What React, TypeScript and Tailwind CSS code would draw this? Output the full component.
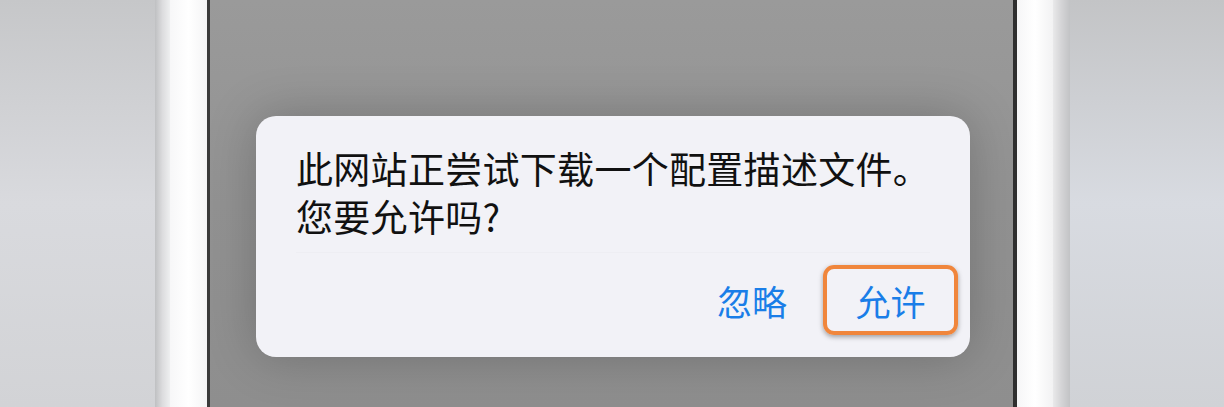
export default function App() {
  return (
    <div
      className="flex h-[407px] w-[1224px] overflow-hidden"
      style={{ fontFamily: '"Noto Sans CJK SC", "Noto Sans", sans-serif' }}
    >
      {/* backdrop left */}
      <div className="w-[155px] shrink-0 bg-linear-to-b from-[#c6c7c9] via-[#d9dade] to-[#d2d3d6]" />
      {/* phone frame left */}
      <div className="w-[15px] shrink-0 bg-linear-to-r from-[#bfc0c2] via-[#dcdcde] to-[#eeeff0]" />
      <div className="w-[37px] shrink-0 bg-linear-to-r from-[#f7f7f8] via-white to-[#f4f4f5]" />
      <div className="w-[3px] shrink-0 bg-[#3a3a3a]" />

      {/* screen */}
      <div className="flex w-[803px] shrink-0 items-start bg-linear-to-b from-[#9a9a9a] via-[#929292] to-[#8e8e8e]">
        <div className="ml-[46px] mt-[116px] flex h-[241px] w-[714px] flex-col rounded-[20px] bg-[#f2f2f7] shadow-[0_0_50px_rgba(0,0,0,0.22)]">
          <div className="whitespace-nowrap pl-[40px] pr-[20px] pt-[28px] text-[37px] leading-[48px] tracking-[0.3px] text-[#111]">
            <p>此网站正尝试下载一个配置描述文件。</p>
            <p>您要允许吗?</p>
          </div>
          <div className="mx-[40px] mt-[12px] h-px bg-[#eeeef3]" />
          <div className="mt-auto flex items-center justify-end gap-[36px] pb-[22px] pr-[12px]">
            <span className="text-[35px] leading-none text-[#1a7ee8]">忽略</span>
            <div className="flex h-[70px] w-[135px] items-center justify-center rounded-[11px] border-[4px] border-[#f0863c] shadow-[0_2px_5px_rgba(0,0,0,0.35)]">
              <span className="text-[35px] leading-none text-[#1a7ee8]">允许</span>
            </div>
          </div>
        </div>
      </div>

      {/* phone frame right */}
      <div className="w-[4px] shrink-0 bg-[#2f2f2f]" />
      <div className="w-[36px] shrink-0 bg-linear-to-r from-[#f6f6f7] via-white to-[#f2f2f3]" />
      <div className="w-[17px] shrink-0 bg-linear-to-r from-[#e9e9ea] via-[#d4d4d6] to-[#c2c3c5]" />
      {/* backdrop right */}
      <div className="flex-1 bg-linear-to-b from-[#c3c4c6] via-[#d8dbe1] to-[#d0d2d6]" />
    </div>
  );
}
